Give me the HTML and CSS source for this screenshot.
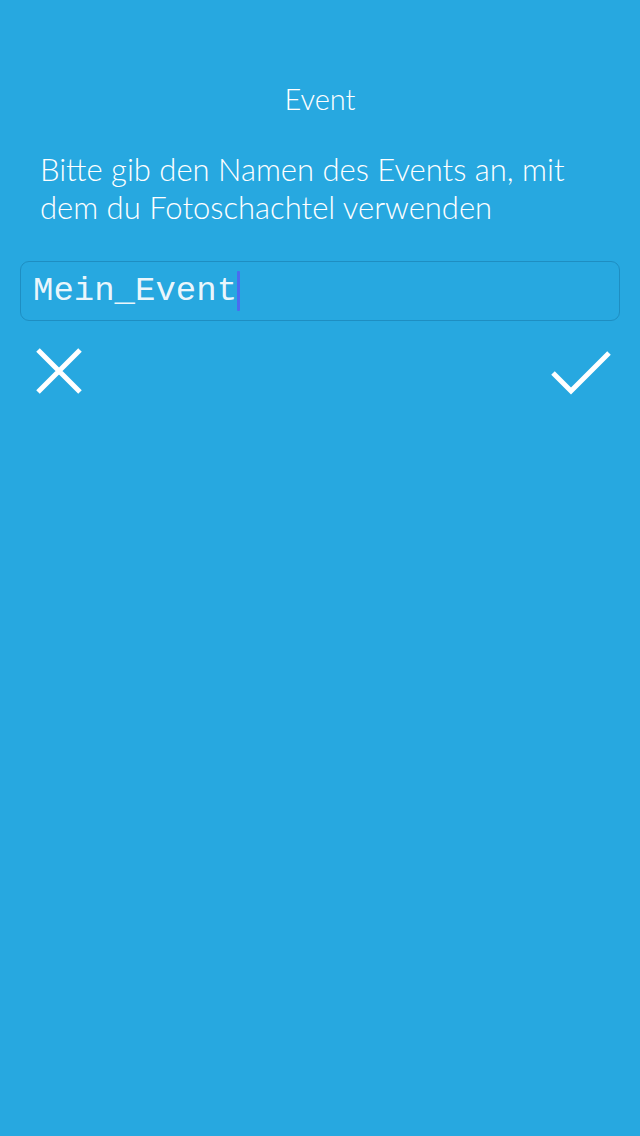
FILE: index.html
```html
<!DOCTYPE html>
<html lang="de">
<head>
<meta charset="utf-8">
<title>Event</title>
<link rel="stylesheet" href="styles.css">
</head>
<body>
<main class="screen">
  <h1 class="title">Event</h1>
  <p class="prompt">Bitte gib den Namen des Events an, mit dem du Fotoschachtel verwenden</p>
  <div class="field"><span class="value">Mein_Event</span><span class="caret"></span></div>
  <div class="actions">
    <button class="btn" aria-label="Abbrechen">
      <svg width="50" height="50" viewBox="0 0 50 50"><path d="M4 3 L46 45 M46 3 L4 45" stroke="#fff" stroke-width="5" fill="none"/></svg>
    </button>
    <button class="btn" aria-label="OK">
      <svg width="62" height="50" viewBox="0 0 62 50"><path d="M4 26 L22 44 L60 6" stroke="#fff" stroke-width="5" fill="none"/></svg>
    </button>
  </div>
</main>
</body>
</html>
```
FILE: styles.css
```css
html, body {
  margin: 0;
  padding: 0;
  background: #27a8e0;
}
.screen {
  width: 640px;
  height: 1136px;
  box-sizing: border-box;
  padding: 80px 20px 0;
  display: flex;
  flex-direction: column;
  color: #fff;
  font-family: "Lato", "Open Sans", sans-serif;
  font-weight: 300;
}
.title {
  margin: 0;
  font-size: 29px;
  font-weight: 300;
  line-height: 38px;
  text-align: center;
}
.prompt {
  margin: 32px 0 0;
  padding: 0 20px;
  font-size: 31px;
  line-height: 38px;
}
.field {
  margin-top: 35px;
  height: 60px;
  box-sizing: border-box;
  border: 1px solid #1e8ec2;
  border-radius: 9px;
  padding: 0 12px;
  display: flex;
  align-items: center;
}
.value {
  font-family: "Courier New", "Liberation Mono", monospace;
  font-size: 34px;
  color: rgba(255, 255, 255, 0.92);
}
.caret {
  width: 3px;
  height: 40px;
  background: #4a6cf0;
  border-radius: 1px;
}
.actions {
  margin-top: 26px;
  display: flex;
  justify-content: space-between;
  padding: 0 9px 0 14px;
}
.btn {
  background: none;
  border: 0;
  padding: 0;
  display: flex;
}
```
